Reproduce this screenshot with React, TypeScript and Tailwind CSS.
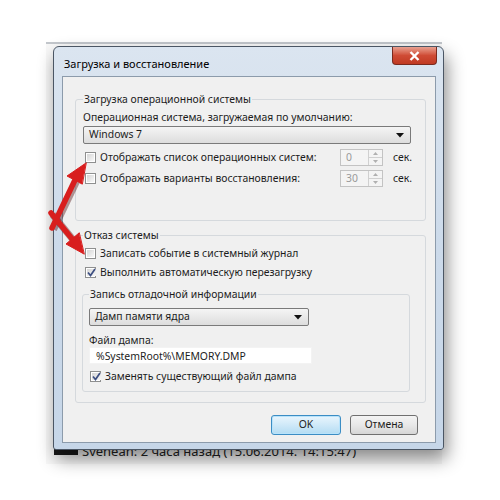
import React from 'react';

function Check({ checked }: { checked?: boolean }) {
    return (
        <span className="w-[11px] h-[11px] shrink-0 border border-[#8e8f8f] bg-white p-[1px] flex">
            <span className="flex-1 flex items-center justify-center bg-gradient-to-br from-[#d6d6d6] to-[#f8f8f8]">
                {checked && (
                    <svg width="9" height="9" viewBox="0 0 9 9">
                        <path d="M1 4.5 L3.5 7.5 L8 1" fill="none" stroke="#3d4f82" strokeWidth="1.7" />
                    </svg>
                )}
            </span>
        </span>
    );
}

function Combo({ text, width }: { text: string; width: string }) {
    return (
        <div className={`${width} h-[18px] flex items-center justify-between pl-[5px] pr-[6px] border border-[#7a7a7a] rounded-[2px] bg-gradient-to-b from-[#f5f5f5] to-[#dddddd]`}>
            <span>{text}</span>
            <svg width="8" height="5" viewBox="0 0 8 5"><path d="M0 0 H8 L4 4.5 Z" fill="#111" /></svg>
        </div>
    );
}

function Spinner({ value }: { value: string }) {
    return (
        <div className="w-[43px] h-[17px] flex border border-[#c3c3c3] bg-[#f4f4f4]">
            <span className="flex-1 pl-[5px] text-[#9a9a9a] leading-[15px]">{value}</span>
            <div className="w-[14px] flex flex-col border-l border-[#d0d0d0]">
                <div className="flex-1 flex items-center justify-center border-b border-[#d0d0d0]">
                    <svg width="5" height="3" viewBox="0 0 5 3"><path d="M0 3 L2.5 0 L5 3 Z" fill="#b0b0b0" /></svg>
                </div>
                <div className="flex-1 flex items-center justify-center">
                    <svg width="5" height="3" viewBox="0 0 5 3"><path d="M0 0 L2.5 3 L5 0 Z" fill="#b0b0b0" /></svg>
                </div>
            </div>
        </div>
    );
}

export default function App() {
    return (
        <main className="relative w-[500px] h-[500px] overflow-hidden bg-white pt-[46px] text-[10.4px] text-[#1c1c1c] font-['Segoe_UI','Noto_Sans',sans-serif]">
            {/* window behind */}
            <div className="absolute left-[46px] top-[42px] w-[396px] h-[422px] border-t-2 border-[#c3c7cc] bg-[#f8f8f8]">
                <div className="absolute left-[8px] bottom-[5px] flex items-center gap-[4px] text-[13px] leading-[16px] text-[#222]">
                    <span className="w-[24px] h-[8px] bg-[#1a1a1a]" />
                    <span>Svenean: 2 часа назад (15.06.2014. 14:15:47)</span>
                </div>
            </div>

            {/* dialog */}
            <div className="relative ml-[53px] w-[391px] h-[404px] flex flex-col rounded-t-[6px] rounded-b-[3px] border border-[#4b5664] bg-gradient-to-b from-[#dbe5f0] via-[#ccdaea] to-[#c6d6e8] shadow-[3px_9px_18px_rgba(0,0,0,0.45)]">
                <div className="h-[29px] flex items-start justify-between pl-[10px] pr-[6px]">
                    <span className="mt-[9px] text-[11px] text-black">Загрузка и восстановление</span>
                    <div className="w-[45px] h-[18px] flex items-center justify-center rounded-b-[4px] border border-t-0 border-[#7a2a1e] bg-gradient-to-b from-[#e8a090] via-[#cf4b35] to-[#c03a22]">
                        <svg width="11" height="10" viewBox="0 0 11 10">
                            <path d="M1.5 1 L9.5 9 M9.5 1 L1.5 9" stroke="#fff" strokeWidth="2.4" />
                        </svg>
                    </div>
                </div>

                <div className="ml-[8px] mr-[7px] h-[367px] border border-[#8c9bab] bg-[#f0f0f0] flex flex-col">
                    {/* group 1 */}
                    <fieldset className="ml-[12px] mt-[14px] w-[351px] h-[130px] border border-[#d5d9dd] rounded-[3px] px-[7px]">
                        <legend className="px-[1px] leading-[16px]">Загрузка операционной системы</legend>
                        <div className="mt-[2px] leading-[16px]">Операционная система, загружаемая по умолчанию:</div>
                        <div className="mt-[1px]">
                            <Combo text="Windows 7" width="w-[328px]" />
                        </div>
                        <div className="mt-[5px] pl-[2px] h-[17px] flex items-center">
                            <Check />
                            <span className="ml-[4px] w-[240px]">Отображать список операционных систем:</span>
                            <Spinner value="0" />
                            <span className="ml-[10px]">сек.</span>
                        </div>
                        <div className="mt-[4px] pl-[2px] h-[17px] flex items-center">
                            <Check />
                            <span className="ml-[4px] w-[240px]">Отображать варианты восстановления:</span>
                            <Spinner value="30" />
                            <span className="ml-[10px]">сек.</span>
                        </div>
                    </fieldset>

                    {/* group 2 */}
                    <fieldset className="ml-[12px] mt-[6px] w-[351px] h-[176px] border border-[#d5d9dd] rounded-[3px] px-[6px]">
                        <legend className="ml-[1px] px-[1px] leading-[16px]">Отказ системы</legend>
                        <div className="mt-[2px] pl-[3px] h-[17px] flex items-center">
                            <Check />
                            <span className="ml-[4px]">Записать событие в системный журнал</span>
                        </div>
                        <div className="mt-[2px] pl-[3px] h-[17px] flex items-center">
                            <Check checked />
                            <span className="ml-[4px]">Выполнить автоматическую перезагрузку</span>
                        </div>
                        <fieldset className="mt-[5px] w-[328px] h-[106px] border border-[#d5d9dd] rounded-[3px] px-[6px]">
                            <legend className="px-[1px] leading-[16px]">Запись отладочной информации</legend>
                            <div className="mt-[6px]">
                                <Combo text="Дамп памяти ядра" width="w-[220px]" />
                            </div>
                            <div className="mt-[7px] leading-[14px]">Файл дампа:</div>
                            <div className="w-[223px] h-[17px] pl-[6px] leading-[16px] bg-white border border-[#f3f3f3]">%SystemRoot%\MEMORY.DMP</div>
                            <div className="mt-[4px] pl-[1px] h-[17px] flex items-center">
                                <Check checked />
                                <span className="ml-[4px]">Заменять существующий файл дампа</span>
                            </div>
                        </fieldset>
                    </fieldset>

                    {/* buttons */}
                    <div className="mt-[12px] mr-[17px] flex justify-end gap-[9px]">
                        <button className="w-[70px] h-[20px] rounded-[3px] border border-[#3c8dc4] bg-gradient-to-b from-[#e9f5fd] via-[#cfe9f8] to-[#b3dcf3] shadow-[inset_0_0_0_1px_#b8e3fb]">OK</button>
                        <button className="w-[68px] h-[20px] rounded-[3px] border border-[#707070] bg-gradient-to-b from-[#f4f4f4] via-[#e8e8e8] to-[#d6d6d6]">Отмена</button>
                    </div>
                </div>
            </div>

            {/* red arrows */}
            <svg className="absolute inset-0 pointer-events-none" width="500" height="500" viewBox="0 0 500 500">
                <g stroke="#4a0808" strokeOpacity="0.4" strokeWidth="7" fill="none" transform="translate(1.5 1.5)">
                    <path d="M52 228 L75 180" />
                    <path d="M51 213 L73 240" />
                </g>
                <g fill="#d81e1e" stroke="#d81e1e" strokeWidth="5.5" strokeLinecap="round">
                    <path d="M52 228 L75 180" fill="none" />
                    <path d="M86 163 L67 176 L82 184 Z" strokeWidth="1" />
                    <path d="M51 213 L73 240" fill="none" />
                    <path d="M84 254 L66 244 L79 233 Z" strokeWidth="1" />
                </g>
            </svg>
        </main>
    );
}
